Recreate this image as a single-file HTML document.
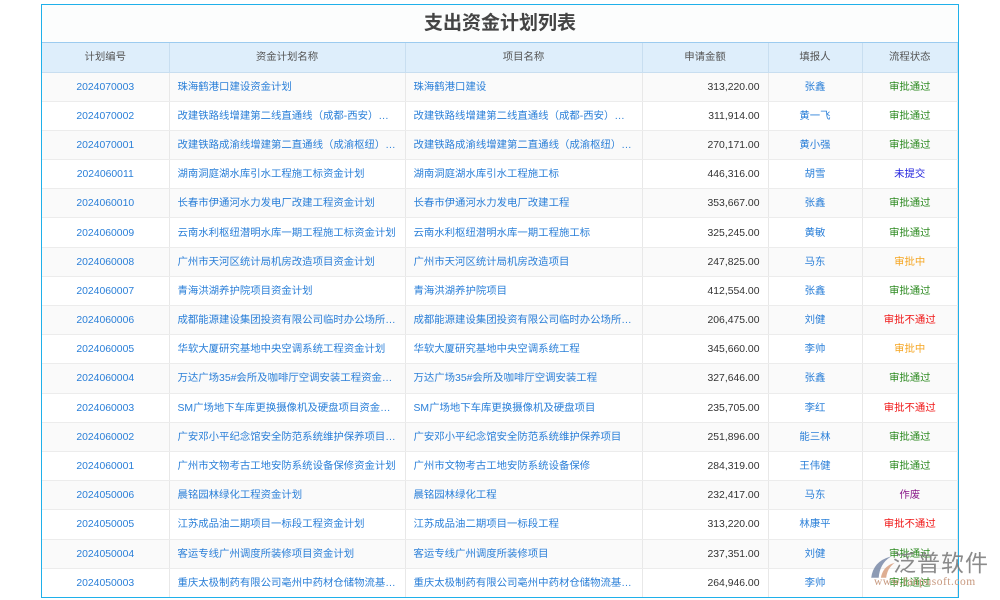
<!DOCTYPE html>
<html><head><meta charset="utf-8"><style>
*{margin:0;padding:0;box-sizing:border-box}
body{width:1000px;height:600px;background:#fff;font-family:"Liberation Sans","Noto Sans CJK SC",sans-serif;font-size:10.4px;position:relative;overflow:hidden}
.wrap{position:absolute;left:41px;top:4px;width:918px;height:594px;border:1.5px solid #1fb0ea;background:#fff;overflow:hidden}
.title{height:38px;line-height:38px;text-align:center;font-size:19px;font-weight:bold;color:#444;background:#fcfdfd;border-bottom:1px solid #9ccbef}
table{border-collapse:collapse;width:100%;table-layout:fixed}
th{height:29px;line-height:26px;padding-top:2px;background:#deeefb;color:#555;font-weight:normal;border-right:1px solid #c8def0;border-bottom:1px solid #c8def0;vertical-align:middle}
td{height:29.2px;line-height:26px;padding:2px 8px 0;vertical-align:middle;border-right:1px solid #e8e8e8;border-bottom:1px solid #ececec;color:#2a7fd8;white-space:nowrap;overflow:hidden;text-overflow:ellipsis}
tr:nth-child(even) td{background:#fafafa}
td:nth-child(1),td:nth-child(5),td:nth-child(6){text-align:center}
td:nth-child(4){text-align:right;color:#333}
.g{color:#2e8b22}.r{color:#f01818}.o{color:#f5a623}.b{color:#2323dd}.p{color:#8b1a8b}
.wm{position:absolute;left:868px;top:550px}
</style></head><body>
<div class="wrap">
<div class="title">支出资金计划列表</div>
<table>
<colgroup><col style="width:127px"><col style="width:236px"><col style="width:237px"><col style="width:126px"><col style="width:94px"><col></colgroup>
<tr><th>计划编号</th><th>资金计划名称</th><th>项目名称</th><th>申请金额</th><th>填报人</th><th>流程状态</th></tr>
<tr><td>2024070003</td><td>珠海鹤港口建设资金计划</td><td>珠海鹤港口建设</td><td>313,220.00</td><td>张鑫</td><td class="g">审批通过</td></tr>
<tr><td>2024070002</td><td>改建铁路线增建第二线直通线（成都-西安）电…</td><td>改建铁路线增建第二线直通线（成都-西安）电…</td><td>311,914.00</td><td>黄一飞</td><td class="g">审批通过</td></tr>
<tr><td>2024070001</td><td>改建铁路成渝线增建第二直通线（成渝枢纽）…</td><td>改建铁路成渝线增建第二直通线（成渝枢纽）…</td><td>270,171.00</td><td>黄小强</td><td class="g">审批通过</td></tr>
<tr><td>2024060011</td><td>湖南洞庭湖水库引水工程施工标资金计划</td><td>湖南洞庭湖水库引水工程施工标</td><td>446,316.00</td><td>胡雪</td><td class="b">未提交</td></tr>
<tr><td>2024060010</td><td>长春市伊通河水力发电厂改建工程资金计划</td><td>长春市伊通河水力发电厂改建工程</td><td>353,667.00</td><td>张鑫</td><td class="g">审批通过</td></tr>
<tr><td>2024060009</td><td>云南水利枢纽潜明水库一期工程施工标资金计划</td><td>云南水利枢纽潜明水库一期工程施工标</td><td>325,245.00</td><td>黄敏</td><td class="g">审批通过</td></tr>
<tr><td>2024060008</td><td>广州市天河区统计局机房改造项目资金计划</td><td>广州市天河区统计局机房改造项目</td><td>247,825.00</td><td>马东</td><td class="o">审批中</td></tr>
<tr><td>2024060007</td><td>青海洪湖养护院项目资金计划</td><td>青海洪湖养护院项目</td><td>412,554.00</td><td>张鑫</td><td class="g">审批通过</td></tr>
<tr><td>2024060006</td><td>成都能源建设集团投资有限公司临时办公场所…</td><td>成都能源建设集团投资有限公司临时办公场所…</td><td>206,475.00</td><td>刘健</td><td class="r">审批不通过</td></tr>
<tr><td>2024060005</td><td>华软大厦研究基地中央空调系统工程资金计划</td><td>华软大厦研究基地中央空调系统工程</td><td>345,660.00</td><td>李帅</td><td class="o">审批中</td></tr>
<tr><td>2024060004</td><td>万达广场35#会所及咖啡厅空调安装工程资金…</td><td>万达广场35#会所及咖啡厅空调安装工程</td><td>327,646.00</td><td>张鑫</td><td class="g">审批通过</td></tr>
<tr><td>2024060003</td><td>SM广场地下车库更换摄像机及硬盘项目资金…</td><td>SM广场地下车库更换摄像机及硬盘项目</td><td>235,705.00</td><td>李红</td><td class="r">审批不通过</td></tr>
<tr><td>2024060002</td><td>广安邓小平纪念馆安全防范系统维护保养项目…</td><td>广安邓小平纪念馆安全防范系统维护保养项目</td><td>251,896.00</td><td>能三林</td><td class="g">审批通过</td></tr>
<tr><td>2024060001</td><td>广州市文物考古工地安防系统设备保修资金计划</td><td>广州市文物考古工地安防系统设备保修</td><td>284,319.00</td><td>王伟健</td><td class="g">审批通过</td></tr>
<tr><td>2024050006</td><td>晨铭园林绿化工程资金计划</td><td>晨铭园林绿化工程</td><td>232,417.00</td><td>马东</td><td class="p">作废</td></tr>
<tr><td>2024050005</td><td>江苏成品油二期项目一标段工程资金计划</td><td>江苏成品油二期项目一标段工程</td><td>313,220.00</td><td>林康平</td><td class="r">审批不通过</td></tr>
<tr><td>2024050004</td><td>客运专线广州调度所装修项目资金计划</td><td>客运专线广州调度所装修项目</td><td>237,351.00</td><td>刘健</td><td class="g">审批通过</td></tr>
<tr><td>2024050003</td><td>重庆太极制药有限公司亳州中药材仓储物流基…</td><td>重庆太极制药有限公司亳州中药材仓储物流基…</td><td>264,946.00</td><td>李帅</td><td class="g">审批通过</td></tr>
</table>
</div>
<div class="wm">
<svg width="30" height="30" viewBox="0 0 28 28" style="position:absolute;left:0;top:2px;opacity:.85"><path d="M3 24 Q5 8 22 4 Q11 10 10 24Z" fill="#7a8aa8"/><path d="M12 24 Q14 13 25 10 Q18 15 17 24Z" fill="#d9a080"/></svg>
<div style="position:absolute;left:25px;top:0;font-size:23px;line-height:26px;color:#777;letter-spacing:1px;white-space:nowrap;opacity:.85">泛普软件</div>
<div style="position:absolute;left:6px;top:26px;font-size:11.5px;color:#c89a80;font-family:'Liberation Serif',serif;white-space:nowrap;letter-spacing:.5px">www.fanpusoft.com</div>
</div>
</body></html>
